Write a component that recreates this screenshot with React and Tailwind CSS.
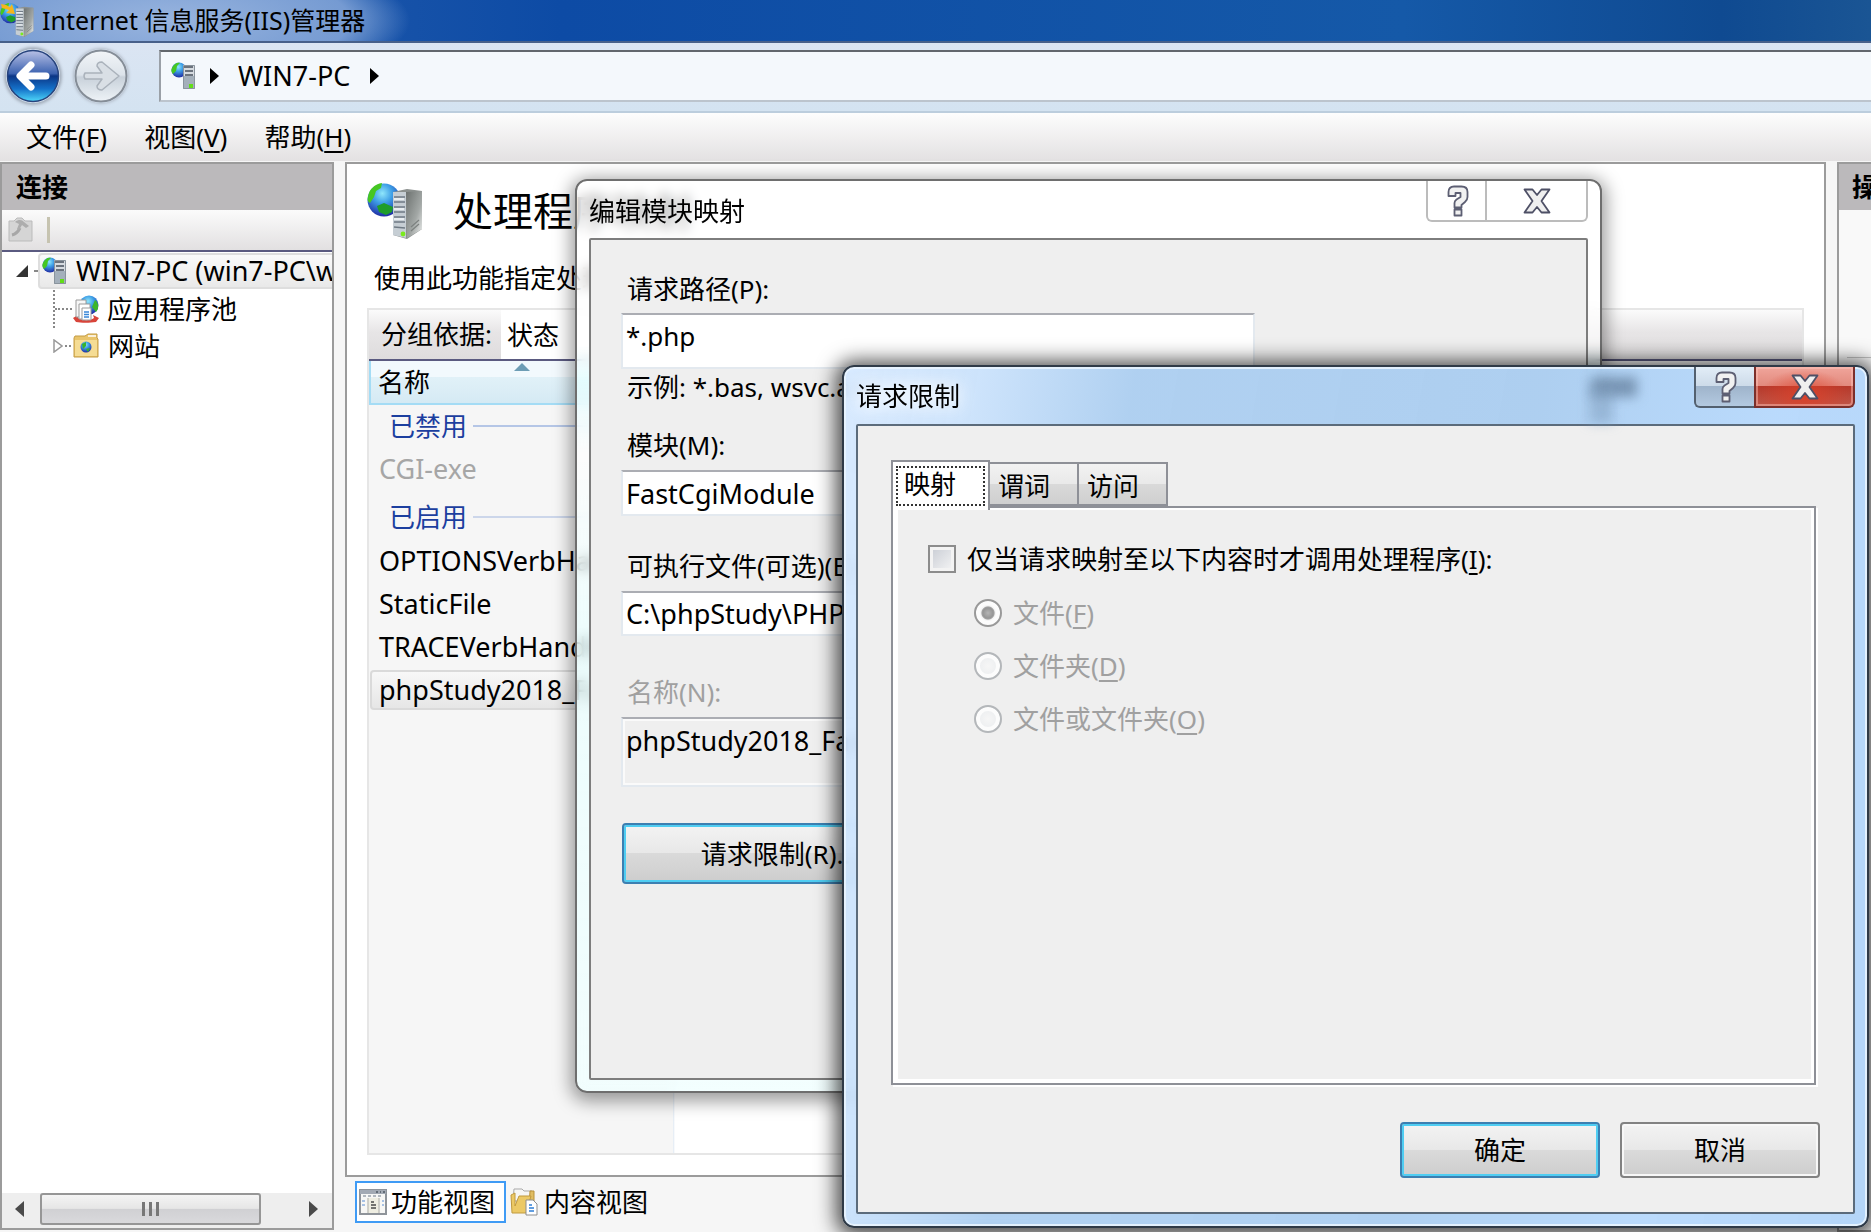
import React, { useState } from 'react';

const ServerIcon = ({ className }) => (
  <svg viewBox="0 0 56 56" className={className} aria-hidden="true">
    <defs>
      <radialGradient id="globe" cx="0.45" cy="0.3" r="0.75">
        <stop offset="0" stopColor="#8fe6fb" />
        <stop offset="0.4" stopColor="#3d9ee6" />
        <stop offset="1" stopColor="#1c1f9c" />
      </radialGradient>
      <linearGradient id="side" x1="0" y1="0" x2="1" y2="1">
        <stop offset="0" stopColor="#6c716f" />
        <stop offset="0.6" stopColor="#a3a8a6" />
        <stop offset="1" stopColor="#eef0ef" />
      </linearGradient>
    </defs>
    <circle cx="17" cy="17" r="16.5" fill="url(#globe)" />
    <path d="M1 14C2 6 8 1 15 0l-1 5-5 3-2 6-4 6C1 19 0 17 1 14z" fill="#46c722" />
    <path d="M10 23l7-3 9 4-1 5-6 3-7-3z" fill="#1f9d2b" />
    <path d="M26 9l14-3 15 2v38L40 56 26 52z" fill="#8b908e" />
    <path d="M39 9l16-1v38L40 55z" fill="url(#side)" />
    <path d="M26 9h13v46l-13-3z" fill="#c6ced4" />
    <path d="M27 14h11M27 19h11M27 24h11M27 29h11M27 34h11M27 39h11M27 44l11 1" stroke="#6f7a84" strokeWidth="1.6" />
    <path d="M27 16h10M27 26h10M27 36h10" stroke="#f4f7f9" strokeWidth="1.6" />
    <circle cx="36" cy="51" r="2.4" fill="#7bea1e" />
    <path d="M44 44l8-7M44 48l8-7" stroke="#7d8280" strokeWidth="1.2" />
  </svg>
);

const SmallServerIcon = ({ className }) => (
  <svg viewBox="0 0 24 28" className={className} aria-hidden="true">
    <circle cx="8" cy="8" r="7.5" fill="url(#globe)" />
    <path d="M1 6C3 2 6 0 9 1L6 4 5 9l-3 3C0 10 0 8 1 6z" fill="#46c722" />
    <path d="M12 3h12v24H12z" fill="#a4b0bb" />
    <path d="M12 3h12v11H12z" fill="#d6dbe0" />
    <path d="M13 5h9M14 9h8M14 13h8" stroke="#48525c" strokeWidth="1.6" />
    <path d="M12.5 3.5h11v23h-11z" fill="none" stroke="#8a949d" />
    <path d="M18 22h4v4h-4z" fill="#62dd18" />
  </svg>
);

const AppPoolIcon = () => (
  <svg viewBox="0 0 26 28" className="h-7 w-[26px] shrink-0" aria-hidden="true">
    <circle cx="16" cy="10" r="9.5" fill="url(#globe)" />
    <path d="M22 5c4 3 4 9 1 12l-4-5z" fill="#3cb62a" />
    <path d="M0 23l5-3v3c5 3 12 3 16 0l-1-3 6 3-3 4c-6 1-15 1-20 0z" fill="#d8443a" />
    <path d="M3 5h10v17H3z" fill="#f7f7f7" stroke="#9b9b9b" />
    <path d="M6 9h11v15H6z" fill="#fff" stroke="#9b9b9b" />
    <path d="M9 13h9v12H9z" fill="#fff" stroke="#9b9b9b" />
    <path d="M11 17h5M11 19.5h5M11 22h5" stroke="#3a87d8" strokeWidth="1.3" />
  </svg>
);

const SitesIcon = () => (
  <svg viewBox="0 0 26 26" className="h-[26px] w-[26px] shrink-0" aria-hidden="true">
    <path d="M1 5l1-2h10l3-2h9v4l1 1v18H1z" fill="#e9c46b" stroke="#c39b44" />
    <path d="M2 7h22v16H2z" fill="#f5dc94" />
    <path d="M15 3h8" stroke="#fff" strokeWidth="1.5" />
    <circle cx="13" cy="14" r="5.5" fill="url(#globe)" />
    <path d="M9 11l4-2v4l-3 3zM13 16l4-1-2 4z" fill="#37b32b" />
  </svg>
);

const PlugIcon = () => (
  <svg viewBox="0 0 26 26" className="h-[26px] w-[26px]" aria-hidden="true">
    <path d="M2 4h5l3-3h5l3 3h7v20H2z" fill="#d5d5d5" stroke="#bbb" />
    <path d="M5 18c4-1 6-3 8-7" fill="none" stroke="#a7a7a7" strokeWidth="3" />
    <path d="M8 5c4-3 7-2 9 0l5 4-3 2-4-3-3 5-2-1 2-5z" fill="#adadad" />
  </svg>
);

const FeaturesIcon = () => (
  <svg viewBox="0 0 28 26" className="h-[26px] w-7" aria-hidden="true">
    <path d="M1 1h26v24H1z" fill="#f7f7f5" stroke="#8f949a" strokeWidth="2" />
    <path d="M1 1h26v4H1z" fill="#a3aab4" />
    <path d="M17 3h2M21 3h1M24 3h2" stroke="#4f5863" strokeWidth="1.5" />
    <path d="M4 7h20" stroke="#9aa2ac" strokeWidth="1.5" strokeDasharray="3 2" />
    <path d="M9 9h11v15H9z" fill="#efeee2" />
    <path d="M9 9v15M20 9v15" stroke="#c3c4bd" strokeWidth="1.5" />
    <path d="M12 13h3M12 16h5M12 19h5" stroke="#4b4b4b" strokeWidth="1.5" />
    <path d="M3 12h3M3 16h3M23 12h2M23 16h2" stroke="#8db0de" strokeWidth="1.5" />
  </svg>
);

const ContentIcon = () => (
  <svg viewBox="0 0 28 28" className="h-7 w-7" aria-hidden="true">
    <path d="M4 1h8l2 2h8v10H3z" fill="#f6f6f6" stroke="#a9a9a9" />
    <path d="M20 3h4v17h-5z" fill="#e0bd62" stroke="#b8913b" />
    <path d="M1 7l4-2v13L9 8h12l-5 17H2z" fill="#ecc966" stroke="#c09a3f" strokeLinejoin="round" />
    <path d="M16 12h7l4 4v11H16z" fill="#fff" stroke="#8e8e8e" />
    <path d="M19 17h3M19 20h5M19 23h5" stroke="#2f7fd6" strokeWidth="1.6" />
  </svg>
);

const HelpGlyph = () => (
  <svg viewBox="0 0 22 32" className="ml-0.5 h-8 w-[22px]" aria-hidden="true">
    <path
      d="M1.5 11V7Q1.5 1.5 7 1.5h7.5Q20.5 1.5 20.5 7v5Q20.5 15 18 17l-3.500 3v2.500h-7V18Q7.500 16 9.500 14.500L13.500 12V8h-5v3zM7.500 24.500h7v6h-7z"
      fill="#f1f1f1"
      stroke="#5d5f73"
      strokeWidth="1.8"
      strokeLinejoin="round"
    />
  </svg>
);

const CloseGlyph = () => (
  <svg viewBox="0 0 28 26" className="h-[26px] w-7" aria-hidden="true">
    <path
      d="M1.5 1.5h8L14 7l4.500-5.500h8L18.500 13l8 11.500h-8L14 19l-4.500 5.500h-8L9.500 13z"
      fill="#efefef"
      stroke="#4e5066"
      strokeWidth="1.8"
      strokeLinejoin="round"
    />
  </svg>
);

const NavButtons = () => (
  <div className="flex items-center gap-[14px]">
    <button aria-label="后退" className="h-[54px] w-[54px] rounded-full shadow-[0_0_3px_2px_#a3adba]">
      <svg viewBox="0 0 54 54" className="h-full w-full">
        <defs>
          <linearGradient id="back" x1="0" y1="0" x2="0" y2="1">
            <stop offset="0" stopColor="#b9c1e6" />
            <stop offset="0.45" stopColor="#3d63b0" />
            <stop offset="0.5" stopColor="#0b3585" />
            <stop offset="0.75" stopColor="#1470c8" />
            <stop offset="1" stopColor="#4fd9fa" />
          </linearGradient>
        </defs>
        <circle cx="27" cy="27" r="25.5" fill="url(#back)" stroke="#27437c" strokeWidth="1.5" />
        <path d="M25 16L14 27l11 11M15 27h25" fill="none" stroke="#fff" strokeWidth="7" strokeLinecap="round" strokeLinejoin="round" />
      </svg>
    </button>
    <button aria-label="前进" className="h-[54px] w-[54px] rounded-full shadow-[0_0_3px_1px_#b3bcc8]">
      <svg viewBox="0 0 54 54" className="h-full w-full">
        <defs>
          <linearGradient id="forward" x1="0" y1="0" x2="0" y2="1">
            <stop offset="0" stopColor="#f2f5f8" />
            <stop offset="0.48" stopColor="#dce3ea" />
            <stop offset="0.52" stopColor="#c8d1da" />
            <stop offset="1" stopColor="#eef3f7" />
          </linearGradient>
        </defs>
        <circle cx="27" cy="27" r="25.5" fill="url(#forward)" stroke="#858d97" strokeWidth="2" />
        <path
          d="M11 24h17l-5-7q0-4 5-4l17 14-17 14q-5 0-5-4l5-7H11q-2-3 0-6z"
          fill="#d9dfe5"
          stroke="#aab2bb"
          strokeWidth="1.5"
          strokeLinejoin="round"
        />
      </svg>
    </button>
  </div>
);

const Key = ({ children }) => <span className="underline decoration-2 underline-offset-4">{children}</span>;

const PushButton = ({ primary, className, children }) => (
  <button
    className={`rounded-[4px] border-2 bg-[linear-gradient(#f3f3f3,#e8e8e8_49%,#dadada_50%,#cdcdcd)] ${
      primary
        ? 'border-[#3c7fb1] shadow-[inset_0_0_0_2px_#4fcdf2]'
        : 'border-[#828282] shadow-[inset_0_0_0_2px_#f7f7f7]'
    } ${className}`}
  >
    {children}
  </button>
);

const menus = [
  { label: '文件', key: 'F' },
  { label: '视图', key: 'V' },
  { label: '帮助', key: 'H' },
];

const groups = [
  { title: '已禁用', line: 'bg-[#b5c6e6]', row: 'h-[43px]', items: [{ name: 'CGI-exe', disabled: true }] },
  {
    title: '已启用',
    line: 'bg-[#ccd6ea]',
    row: 'h-[49px] pt-[5px]',
    items: [
      { name: 'OPTIONSVerbHandler' },
      { name: 'StaticFile' },
      { name: 'TRACEVerbHandler' },
      { name: 'phpStudy2018_FastCgi', selected: true },
    ],
  },
];

const ConnectionsPanel = () => (
  <aside className="mb-0.5 flex w-[334px] shrink-0 flex-col border-2 border-[#9b9b9b] bg-white">
    <h2 className="h-[46px] shrink-0 bg-[#bbb9bb] pl-[14px] leading-[46px] font-bold">连接</h2>
    <div className="flex h-[42px] shrink-0 items-center gap-[14px] border-b-2 border-[#5a5a80] bg-[linear-gradient(#fbfbfb,#e2e0e1)] pl-[5px]">
      <PlugIcon />
      <span className="h-[26px] w-[3px] bg-[#c6c3b0]" />
    </div>
    <ul className="min-h-0 flex-1 overflow-hidden whitespace-nowrap">
      <li>
        <div className="flex h-[38px] items-center">
          <svg viewBox="0 0 12 12" className="ml-[14px] h-3 w-3 shrink-0">
            <path d="M12 0v12H0z" fill="#333" />
          </svg>
          <span className="ml-1.5 w-1 shrink-0 border-t-2 border-dotted border-[#888]" />
          <a
            href="#server"
            className="flex h-9 flex-1 items-center gap-[10px] rounded-[4px] border-2 border-[#dedede] bg-[linear-gradient(#fafafa,#e9e9e9)] pl-0.5 text-[27px]"
          >
            <SmallServerIcon className="h-7 w-6 shrink-0" />
            WIN7-PC (win7-PC\win7)
          </a>
        </div>
        <ul className="ml-[51px]">
          <li className="flex h-[38px] items-center border-l-2 border-dotted border-[#888]">
            <span className="mr-px w-[17px] border-t-2 border-dotted border-[#888]" />
            <AppPoolIcon />
            <a href="#pools" className="ml-2">应用程序池</a>
          </li>
          <li className="flex h-[36px] items-center">
            <svg viewBox="0 0 10 14" className="h-[14px] w-[10px]">
              <path d="M1 1v12l8-6z" fill="#fff" stroke="#999" strokeWidth="1.5" />
            </svg>
            <span className="mx-0.5 w-1.5 border-t-2 border-dotted border-[#888]" />
            <SitesIcon />
            <a href="#sites" className="ml-[9px]">网站</a>
          </li>
        </ul>
      </li>
    </ul>
    <div className="flex h-[35px] shrink-0 items-start bg-[#eee]">
      <button aria-label="向左滚动" className="flex h-8 w-[38px] items-center justify-center pr-1">
        <svg viewBox="0 0 9 16" className="h-4 w-[9px]"><path d="M9 0v16L0 8z" fill="#4a4a4a" /></svg>
      </button>
      <div className="flex h-8 w-[221px] items-center justify-center gap-1 rounded-[3px] border-2 border-[#969696] bg-[linear-gradient(#f4f4f4,#e6e6e6_48%,#d0d0d3_50%,#d9d9dc)]">
        <span className="h-[14px] w-[3px] bg-[#777]" />
        <span className="h-[14px] w-[3px] bg-[#777]" />
        <span className="h-[14px] w-[3px] bg-[#777]" />
      </div>
      <button aria-label="向右滚动" className="ml-auto flex h-8 w-[38px] items-center justify-center">
        <svg viewBox="0 0 9 16" className="h-4 w-[9px]"><path d="M0 0v16l9-8z" fill="#4a4a4a" /></svg>
      </button>
    </div>
  </aside>
);

const HandlerList = () => (
  <div className="flex flex-1 flex-col border-2 border-[#e6e6e6]">
    <div className="flex h-[51px] shrink-0 border-b-2 border-[#5a5a80] bg-[linear-gradient(#fbfbfb,#e7e5e6_45%,#dedcdd)]">
      <label htmlFor="group" className="w-[132px] shrink-0 pl-[12px] leading-[49px]">分组依据:</label>
      <select id="group" className="w-[240px] appearance-none bg-white pl-[6px]">
        <option>状态</option>
      </select>
    </div>
    <div className="flex-1 bg-[linear-gradient(90deg,#f6f6f6_304px,#dfe8f2_304px,#fff_306px)]">
      <table className="w-[304px] table-fixed border-collapse text-left">
        <thead>
          <tr>
            <th className="relative h-[43px] border-2 border-t-0 border-[#a4dcf5] bg-[linear-gradient(#f2f9fd_37%,#e1f1f8_38%,#d5eaf4)] p-0 pl-[7px] font-normal">
              名称
              <svg viewBox="0 0 16 8" className="absolute top-0.5 left-[143px] h-2 w-4">
                <path d="M8 0l8 8H0z" fill="#6d9db5" />
              </svg>
            </th>
          </tr>
        </thead>
        {groups.map((group) => (
          <tbody key={group.title}>
            <tr>
              <th className={`p-0 pl-[19px] font-normal text-[#1c3f9f] ${group.row}`}>
                <div className="flex items-center gap-[6px]">
                  {group.title}
                  <span className={`h-0.5 flex-1 ${group.line}`} />
                </div>
              </th>
            </tr>
            {group.items.map((item) => (
              <tr key={item.name}>
                <td className="h-[43px] p-0">
                  <div
                    className={`h-10 overflow-hidden rounded-[4px] border-2 pl-[7px] text-[27px] leading-9 whitespace-nowrap ${
                      item.selected ? 'border-[#dadada] bg-[linear-gradient(#f8f8f8,#e6e6e6)]' : 'border-transparent'
                    } ${item.disabled ? 'text-[#a6a6a6]' : ''}`}
                  >
                    {item.name}
                  </div>
                </td>
              </tr>
            ))}
          </tbody>
        ))}
      </table>
    </div>
  </div>
);

const EditMappingDialog = () => (
  <section
    role="dialog"
    aria-label="编辑模块映射"
    className="absolute top-[179px] left-[575px] flex h-[914px] w-[1027px] flex-col rounded-[12px] border-2 border-[#6e6e6e] bg-[linear-gradient(rgba(255,255,255,.66),rgba(255,255,255,.66)_18%,rgba(228,255,255,.75)_22%,rgba(255,255,255,.66)_30%,rgba(232,255,255,.7)_50%,rgba(240,255,255,.8))] px-3 pb-[11px] shadow-[0_4px_18px_4px_rgba(0,0,0,.4)] backdrop-blur-[6px]"
  >
    <header className="flex h-[57px] shrink-0 justify-between">
      <h2 className="pt-[10px] leading-[40px]">编辑模块映射</h2>
      <div className="flex h-[41px] rounded-b-[6px] border-2 border-t-0 border-[#bcbcbc] bg-white">
        <button aria-label="帮助" className="flex w-[59px] items-center justify-center border-r-2 border-[#bcbcbc]">
          <HelpGlyph />
        </button>
        <button aria-label="关闭" className="flex w-[99px] items-center justify-center">
          <CloseGlyph />
        </button>
      </div>
    </header>
    <div className="flex flex-1 flex-col items-start rounded-[2px] border-2 border-[#7d7d7d] bg-[#efefef] pt-[29px] pl-[30px]">
      <label htmlFor="path" className="pl-[6px] leading-[40px]">请求路径(P):</label>
      <input
        id="path"
        defaultValue="*.php"
        className="mt-[4px] h-[56px] w-[634px] border-2 border-[#e3e9ef] border-t-[#abadb3] bg-white px-[3px] pb-[10px] text-[26px]"
      />
      <p className="pl-[6px] leading-[36px]">示例: *.bas, wsvc.axd</p>
      <label htmlFor="module" className="mt-[20px] pl-[6px] leading-[40px]">模块(M):</label>
      <input
        id="module"
        defaultValue="FastCgiModule"
        className="mt-[5px] h-[46px] w-[634px] border-2 border-[#e3e9ef] border-t-[#abadb3] bg-white px-[3px] text-[27px]"
      />
      <label htmlFor="exe" className="mt-[30px] pl-[6px] leading-[40px]">可执行文件(可选)(E):</label>
      <input
        id="exe"
        defaultValue="C:\phpStudy\PHP"
        className="mt-[5px] h-[45px] w-[634px] border-2 border-[#e3e9ef] border-t-[#abadb3] bg-white px-[3px] text-[27px]"
      />
      <label htmlFor="name" className="mt-[36px] pl-[6px] leading-[40px] text-[#a0a0a0]">名称(N):</label>
      <input
        id="name"
        readOnly
        defaultValue="phpStudy2018_FastCgi"
        className="mt-[5px] h-[70px] w-[634px] border-2 border-[#e3e9ef] border-t-[#abadb3] px-[3px] pb-6 text-[27px] shadow-[inset_0_0_0_2px_#fafafa]"
      />
      <PushButton primary className="mt-[36px] ml-px h-[61px] w-[314px]">请求限制(R)...</PushButton>
    </div>
  </section>
);

const tabs = ['映射', '谓词', '访问'];

const targets = [
  { label: '文件', key: 'F' },
  { label: '文件夹', key: 'D' },
  { label: '文件或文件夹', key: 'O' },
];

const RestrictionsDialog = () => {
  const [tab, setTab] = useState('映射');

  return (
    <section
      role="dialog"
      aria-label="请求限制"
      className="absolute top-[365px] left-[842px] flex h-[863px] w-[1027px] flex-col rounded-[12px] border-2 border-[#2f3a47] bg-[linear-gradient(100deg,rgba(214,233,255,.95),rgba(200,225,252,.9)_12%,rgba(168,204,240,.9)_25%,rgba(168,204,240,.92)_60%,rgba(180,215,252,.92)_80%,rgba(176,211,248,.94))] px-3 pb-3 shadow-[0_2px_20px_6px_rgba(0,0,0,.7),inset_0_0_0_2px_rgba(235,246,255,.85)] backdrop-blur-[6px]"
    >
      <header className="relative flex h-[57px] shrink-0 justify-between">
        <h2 className="pt-[9px] leading-[40px] [text-shadow:0_0_14px_#fff,0_0_20px_#fff]">请求限制</h2>
        <span className="absolute top-[10px] right-[218px] h-5 w-[46px] bg-[#5f7b98]/70 blur-[6px]" />
        <span className="absolute top-5 right-[242px] h-9 w-6 bg-[#7f9dbd]/50 blur-[6px]" />
        <div className="flex h-[41px]">
          <button
            aria-label="帮助"
            className="flex w-[60px] items-center justify-center rounded-bl-[6px] border-2 border-t-0 border-r-0 border-[#53606f] bg-[linear-gradient(#e2edf7,#cddbe9_48%,#9fb4cb_50%,#b3c9e0)]"
          >
            <HelpGlyph />
          </button>
          <button
            aria-label="关闭"
            className="flex w-[101px] items-center justify-center rounded-br-[6px] border-2 border-t-0 border-[#7c2f2a] bg-[radial-gradient(ellipse_at_50%_75%,rgba(222,64,40,.85),transparent_65%),linear-gradient(#f0a59b,#e28a7e_48%,#b6392b_50%,#bf5648)] shadow-[inset_0_0_0_2px_rgba(255,200,190,.45)]"
          >
            <CloseGlyph />
          </button>
        </div>
      </header>
      <div className="flex flex-1 flex-col rounded-[2px] border-2 border-[#5b6b7b] bg-[#efefef] pt-[32px] pr-[37px] pb-[34px] pl-[33px]">
        <div role="tablist" className="flex h-[48px] items-end">
          {tabs.map((name) => (
            <button
              key={name}
              role="tab"
              aria-selected={tab === name}
              onClick={() => setTab(name)}
              className={
                tab === name
                  ? 'z-10 -mb-1 h-[50px] w-[99px] border-2 border-b-0 border-[#8e9097] bg-white p-[3px] pt-0.5'
                  : 'h-[44px] w-[89px] border-2 border-l-0 border-[#8e9097] bg-[linear-gradient(#f2f2f2,#e9e9e9_49%,#d9d9d9_50%,#cfcfcf)] pt-0.5 pl-[8px] text-left'
              }
            >
              {tab === name ? (
                <span className="block h-10 border-2 border-dotted border-[#333] pl-1.5 text-left leading-8">{name}</span>
              ) : (
                name
              )}
            </button>
          ))}
        </div>
        <div role="tabpanel" className="flex flex-1 flex-col border-2 border-[#8e9097] pt-[31px] pl-[35px] shadow-[inset_5px_0_0_#fff,inset_0_-4px_0_#fff,inset_-3px_2px_0_#fff,2px_2px_0_#fff]">
          <label className="flex h-[40px] items-center gap-[11px]">
            <input
              type="checkbox"
              className="h-7 w-7 appearance-none border-2 border-[#8c8c8c] bg-[linear-gradient(135deg,#c7cbd3,#f6f6f6)] shadow-[inset_0_0_0_3px_#f3f3f3]"
            />
            <span>仅当请求映射至以下内容时才调用处理程序(<Key>I</Key>):</span>
          </label>
          <div className="mt-[14px] flex flex-col gap-[13px] pl-[46px] text-[#a0a0a0]">
            {targets.map((target, i) => (
              <label key={target.key} className="flex h-[40px] items-center gap-[11px]">
                <input
                  type="radio"
                  name="target"
                  disabled
                  defaultChecked={i === 0}
                  className="h-7 w-7 appearance-none rounded-full border-2 border-[#b4b7ba] bg-[radial-gradient(#f6f6f6,#e6e9ec)] shadow-[inset_0_0_0_4px_#fcfcfc] checked:border-[#999] checked:bg-[radial-gradient(circle_at_50%_50%,#b4b4b4,#969696_30%,#a2a2a2_36%,#f4f4f4_42%)]"
                />
                <span>{target.label}(<Key>{target.key}</Key>)</span>
              </label>
            ))}
          </div>
        </div>
        <div className="mt-[37px] -mr-1 flex justify-end gap-5">
          <PushButton primary className="h-[56px] w-[200px]">确定</PushButton>
          <PushButton className="h-[56px] w-[200px]">取消</PushButton>
        </div>
      </div>
    </section>
  );
};

const App = () => {
  return (
    <div className="relative flex h-screen flex-col overflow-hidden bg-[#f6f6f6] font-['Noto_Sans','Noto_Sans_CJK_SC',sans-serif] text-[26px] leading-[40px] text-black">
      <header className="flex h-[41px] shrink-0 items-center gap-2 bg-[radial-gradient(240px_70px_at_170px_50%,rgba(165,190,228,.9),rgba(140,172,220,.8)_75%,transparent),linear-gradient(90deg,#2c62b0,#0d4ba5_30%,#1559a8_75%,#0f4a91_92%,#1a5594)] pb-0.5">
        <div className="relative h-9 w-[34px]">
          <ServerIcon className="h-9 w-[34px]" />
          <svg viewBox="0 0 16 16" className="absolute top-0 left-0 h-4 w-4">
            <path d="M1 2l5 1 4 2 2-3 3 10-9-1 3-3-7-2z" fill="#f5b51c" />
          </svg>
        </div>
        <h1 className="text-[25px]">Internet 信息服务(IIS)管理器</h1>
      </header>

      <nav className="flex h-[72px] shrink-0 items-center border-t-2 border-b-2 border-t-[#47608a] border-b-[#bccddd] bg-[linear-gradient(#dbe5f3,#d4e3f1)] pb-0.5 pl-[6px]">
        <NavButtons />
        <div className="ml-[31px] flex h-[52px] flex-1 items-center border-2 border-r-0 border-[#bcc4cd] border-t-[#62676d] border-l-[#9aa0a7] bg-[#f4f8fc] pl-[10px]">
          <SmallServerIcon className="h-7 w-6" />
          <svg viewBox="0 0 9 16" className="ml-[15px] h-4 w-[9px]"><path d="M0 0l9 8-9 8z" /></svg>
          <span className="mr-5 ml-[19px] text-[27px]">WIN7-PC</span>
          <svg viewBox="0 0 9 16" className="h-4 w-[9px]"><path d="M0 0l9 8-9 8z" /></svg>
        </div>
      </nav>

      <div className="flex h-[48px] shrink-0 items-center gap-[37px] bg-[linear-gradient(#fdfdfd,#e3e1e2)] pl-[26px]">
        {menus.map((menu) => (
          <button key={menu.key}>
            {menu.label}(<Key>{menu.key}</Key>)
          </button>
        ))}
      </div>

      <div className="flex min-h-0 flex-1 gap-[11px] pt-px">
        <ConnectionsPanel />
        <main className="flex flex-1 flex-col pb-[9px]">
          <div className="flex flex-1 flex-col border-2 border-[#9b9b9b] bg-white px-5 pb-5">
            <div className="flex h-[92px] shrink-0 items-center gap-[30px] pt-[2px]">
              <ServerIcon className="h-14 w-14" />
              <h2 className="text-[40px] leading-[56px]">处理程序映射</h2>
            </div>
            <p className="pt-px pb-[9px] pl-[7px] leading-[42px]">使用此功能指定处理特定请求类型的响应的资源。</p>
            <HandlerList />
          </div>
          <div className="mt-1 flex h-[42px] shrink-0 items-center pl-[10px]">
            <button className="flex h-[42px] w-[151px] items-center gap-1 border-2 border-[#3f9bf5] bg-white pl-0.5 whitespace-nowrap">
              <FeaturesIcon />
              功能视图
            </button>
            <button className="ml-1 flex items-center gap-1.5 whitespace-nowrap">
              <ContentIcon />
              内容视图
            </button>
          </div>
        </main>
        <aside className="flex w-[34px] shrink-0 flex-col overflow-hidden border-2 border-r-0 border-[#9b9b9b] bg-[#f9f9f9] whitespace-nowrap">
          <h2 className="h-[46px] bg-[#bbb9bb] pl-[13px] leading-[46px] font-bold">操作</h2>
          <hr className="mt-[147px] ml-2 border-[#c4c4c4]" />
        </aside>
      </div>

      <EditMappingDialog />
      <RestrictionsDialog />
    </div>
  );
};

export default App;
